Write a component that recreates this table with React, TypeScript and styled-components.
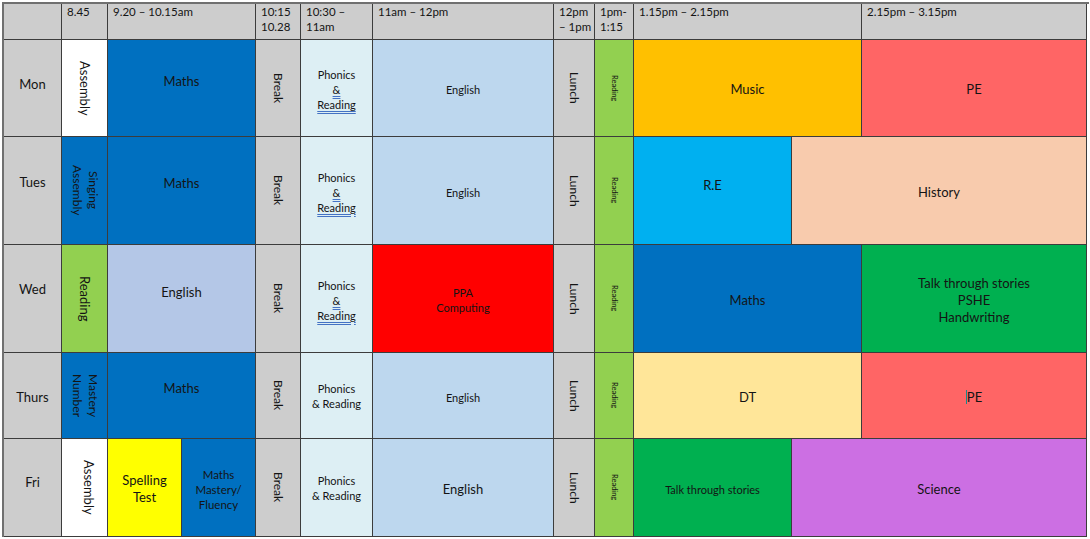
import { createGlobalStyle, styled } from "styled-components"

const GlobalStyle = createGlobalStyle`
  html, body {
    margin: 0;
    padding: 0;
    background: #ffffff;
  }
  body {
    font-family: Lato, "Liberation Sans", sans-serif;
    color: #111;
  }
`

const C = {
  grey: "#cdcdcd",
  white: "#ffffff",
  blue: "#0070c0",
  paleBlue: "#ddeff4",
  english: "#bdd7ee",
  englishWed: "#b4c7e7",
  green: "#92d050",
  music: "#ffc000",
  pe: "#ff6565",
  re: "#00b0f0",
  history: "#f8cbad",
  ppa: "#ff0000",
  talk: "#00b050",
  dt: "#ffe699",
  science: "#cc6fe3",
  yellow: "#ffff00",
}

const S = {
  Table: styled.div`
    margin: 2px 0 0 2px;
    width: 1085px;
    display: grid;
    grid-template-columns: 58px 46px 74px 74px 45px 72px 181px 41px 39px 158px 70px 225px;
    grid-template-rows: 36px 97px 108px 108px 86px 98px;
    border-top: 2px solid #707070;
    border-left: 2px solid #707070;
  `,
  HeadCell: styled.div<{ $span?: number }>`
    grid-column: span ${({ $span }) => $span ?? 1};
    background: ${C.grey};
    border-right: 1px solid #3c3c3c;
    border-bottom: 1px solid #3c3c3c;
    padding: 0 0 0 5px;
    font-size: 11.5px;
    line-height: 15px;
    white-space: nowrap;
    color: #141414;
    overflow: hidden;
  `,
  // $lift > 0 raises the text, $lift < 0 lowers it
  Cell: styled.div<{
    $span?: number
    $bg: string
    $size?: number
    $lift?: number
    $shift?: number
  }>`
    grid-column: span ${({ $span }) => $span ?? 1};
    background: ${({ $bg }) => $bg};
    border-right: 1px solid #3c3c3c;
    border-bottom: 1px solid #3c3c3c;
    display: flex;
    align-items: center;
    justify-content: center;
    text-align: center;
    font-size: ${({ $size }) => $size ?? 13}px;
    line-height: ${({ $size }) => Math.round(($size ?? 13) * 1.33)}px;
    padding-bottom: ${({ $lift }) => Math.max($lift ?? 0, 0)}px;
    padding-top: ${({ $lift }) => Math.max(-($lift ?? 0), 0)}px;
    padding-left: ${({ $shift }) => $shift ?? 0}px;
    color: #141414;
    overflow: hidden;
  `,
  Vertical: styled.span`
    writing-mode: vertical-rl;
    text-orientation: mixed;
  `,
  Marked: styled.span`
    text-decoration: underline double #4472c4;
    text-decoration-thickness: 1px;
    text-underline-offset: 2px;
  `,
  Caret: styled.span`
    display: inline-block;
    width: 1px;
    height: 14px;
    background: #168a8a;
    vertical-align: -2px;
  `,
}

const Phonics = ({ marked }: { marked?: boolean }) =>
  marked ? (
    <S.Cell $bg={C.paleBlue} $size={11} $lift={-3}>
      <div>
        Phonics
        <br />
        <S.Marked>&amp;</S.Marked>
        <br />
        <S.Marked>Reading</S.Marked>
      </div>
    </S.Cell>
  ) : (
    <S.Cell $bg={C.paleBlue} $size={11}>
      <div>
        Phonics
        <br />& Reading
      </div>
    </S.Cell>
  )

const Break = () => (
  <S.Cell $bg={C.grey} $size={12}>
    <S.Vertical>Break</S.Vertical>
  </S.Cell>
)

const Lunch = () => (
  <S.Cell $bg={C.grey} $size={12}>
    <S.Vertical>Lunch</S.Vertical>
  </S.Cell>
)

const SmallReading = () => (
  <S.Cell $bg={C.green} $size={7.5}>
    <S.Vertical>Reading</S.Vertical>
  </S.Cell>
)

const Day = ({ name, lift }: { name: string; lift?: number }) => (
  <S.Cell $bg={C.grey} $size={13} $lift={lift}>
    {name}
  </S.Cell>
)

export default function App() {
  return (
    <>
      <GlobalStyle />
      <S.Table>
        <S.HeadCell />
        <S.HeadCell>8.45</S.HeadCell>
        <S.HeadCell $span={2}>9.20 – 10.15am</S.HeadCell>
        <S.HeadCell>
          10:15
          <br />
          10.28
        </S.HeadCell>
        <S.HeadCell>
          10:30 –
          <br />
          11am
        </S.HeadCell>
        <S.HeadCell>11am – 12pm</S.HeadCell>
        <S.HeadCell>
          12pm
          <br />– 1pm
        </S.HeadCell>
        <S.HeadCell>
          1pm-
          <br />
          1:15
        </S.HeadCell>
        <S.HeadCell $span={2}>1.15pm – 2.15pm</S.HeadCell>
        <S.HeadCell>2.15pm – 3.15pm</S.HeadCell>

        {/* Mon */}
        <Day name="Mon" lift={8} />
        <S.Cell $bg={C.white}>
          <S.Vertical>Assembly</S.Vertical>
        </S.Cell>
        <S.Cell $bg={C.blue} $span={2} $lift={13}>
          Maths
        </S.Cell>
        <Break />
        <Phonics marked />
        <S.Cell $bg={C.english} $size={11} $lift={-3}>
          English
        </S.Cell>
        <Lunch />
        <SmallReading />
        <S.Cell $bg={C.music} $span={2} $lift={-3}>
          Music
        </S.Cell>
        <S.Cell $bg={C.pe} $lift={-3}>
          PE
        </S.Cell>

        {/* Tues */}
        <Day name="Tues" lift={17} />
        <S.Cell $bg={C.blue} $size={12}>
          <S.Vertical>
            Singing
            <br />
            Assembly
          </S.Vertical>
        </S.Cell>
        <S.Cell $bg={C.blue} $span={2} $lift={14}>
          Maths
        </S.Cell>
        <Break />
        <Phonics marked />
        <S.Cell $bg={C.english} $size={11} $lift={-3}>
          English
        </S.Cell>
        <Lunch />
        <SmallReading />
        <S.Cell $bg={C.re} $lift={11}>
          R.E
        </S.Cell>
        <S.Cell $bg={C.history} $span={2} $lift={-3}>
          History
        </S.Cell>

        {/* Wed */}
        <Day name="Wed" lift={18} />
        <S.Cell $bg={C.green} $size={13}>
          <S.Vertical>Reading</S.Vertical>
        </S.Cell>
        <S.Cell $bg={C.englishWed} $span={2} $lift={13}>
          English
        </S.Cell>
        <Break />
        <Phonics marked />
        <S.Cell $bg={C.ppa} $size={11} $lift={-3}>
          <div>
            PPA
            <br />
            Computing
          </div>
        </S.Cell>
        <Lunch />
        <SmallReading />
        <S.Cell $bg={C.blue} $span={2} $lift={-3}>
          Maths
        </S.Cell>
        <S.Cell $bg={C.talk} $lift={-3}>
          <div>
            Talk through stories
            <br />
            PSHE
            <br />
            Handwriting
          </div>
        </S.Cell>

        {/* Thurs */}
        <Day name="Thurs" lift={-3} />
        <S.Cell $bg={C.blue} $size={12}>
          <S.Vertical>
            Mastery
            <br />
            Number
          </S.Vertical>
        </S.Cell>
        <S.Cell $bg={C.blue} $span={2} $lift={14}>
          Maths
        </S.Cell>
        <Break />
        <Phonics />
        <S.Cell $bg={C.english} $size={11} $lift={-3}>
          English
        </S.Cell>
        <Lunch />
        <SmallReading />
        <S.Cell $bg={C.dt} $span={2} $lift={-3}>
          DT
        </S.Cell>
        <S.Cell $bg={C.pe} $lift={-3}>
          <span>
            <S.Caret />
            PE
          </span>
        </S.Cell>

        {/* Fri */}
        <Day name="Fri" lift={10} />
        <S.Cell $bg={C.white} $shift={8}>
          <S.Vertical>Assembly</S.Vertical>
        </S.Cell>
        <S.Cell $bg={C.yellow} $lift={-3}>
          <div>
            Spelling
            <br />
            Test
          </div>
        </S.Cell>
        <S.Cell $bg={C.blue} $size={11.5} $lift={-3}>
          <div>
            Maths
            <br />
            Mastery/
            <br />
            Fluency
          </div>
        </S.Cell>
        <Break />
        <Phonics />
        <S.Cell $bg={C.english} $lift={-3}>
          English
        </S.Cell>
        <Lunch />
        <SmallReading />
        <S.Cell $bg={C.talk} $size={11} $lift={-3}>
          Talk through stories
        </S.Cell>
        <S.Cell $bg={C.science} $span={2} $lift={-3}>
          Science
        </S.Cell>
      </S.Table>
    </>
  )
}
